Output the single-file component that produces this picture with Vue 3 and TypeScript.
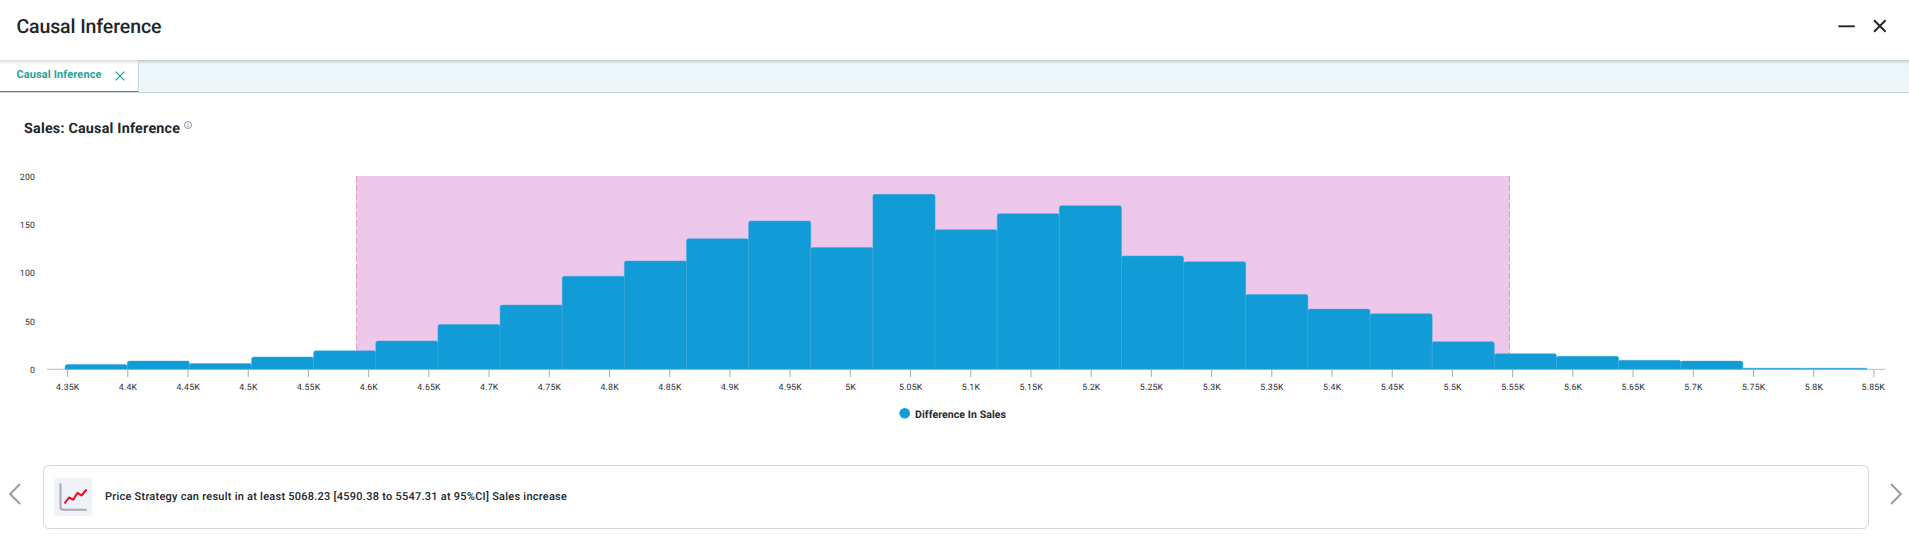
<script setup lang="ts">
interface Bar {
  x: number
  y: number
  path: string
}
interface Tick {
  pos: number
  label: string
}

const BASE = 369.2
const UNIT = 0.966
const TOP = 176
const BAR_START = 65.1
const BAR_WIDTH = 62.14
const OFFSET = 160

const counts: number[] = [
  4.8, 8.4, 5.8, 12.6, 19, 29.2, 46.4, 66.4, 96.2, 112, 135, 153.4, 126, 181, 144.4, 161, 169.2,
  117.2, 111.2, 77.4, 62.2, 57.4, 28.4, 16, 13.4, 9.2, 8.4, 1, 1,
]

const bars: Bar[] = counts.map((n, i) => {
  const x = BAR_START + i * BAR_WIDTH
  const y = BASE - n * UNIT
  const r = Math.min(2, BASE - y)
  const right = x + BAR_WIDTH
  return {
    x,
    y,
    path: `M${x} ${BASE}V${y + r}Q${x} ${y} ${x + r} ${y}H${right - r}Q${right} ${y} ${right} ${y + r}V${BASE}Z`,
  }
})

const xTicks: Tick[] = Array.from({ length: 31 }, (_, i) => ({
  pos: 67.6 + i * 60.21,
  label: `${parseFloat((4.35 + i * 0.05).toFixed(2))}K`,
}))

const yTicks: Tick[] = [0, 50, 100, 150, 200].map((v) => ({
  pos: BASE - v * UNIT,
  label: String(v),
}))

const lowX = 356.6
const highX = 1509.5
</script>

<template>
  <div class="window">
    <header class="titlebar">
      <h1 class="title">Causal Inference</h1>
      <div class="controls">
        <svg width="18" height="18" viewBox="0 0 18 18"><path d="M.4 9.3H16.8" /></svg>
        <svg width="14" height="14" viewBox="0 0 14 14"><path d="M1 1.3L12.6 12.7M12.6 1.3L1 12.7" /></svg>
      </div>
    </header>

    <nav class="tabs">
      <div class="tab">
        <span class="tab-label">Causal Inference</span>
        <svg class="tab-close" width="10" height="10" viewBox="0 0 10 10"><path d="M.6 .6L9.4 9.4M9.4 .6L.6 9.4" /></svg>
      </div>
    </nav>

    <div class="heading">
      <h2 class="subtitle">Sales: Causal Inference</h2>
      <svg class="info" width="8" height="8" viewBox="0 0 8 8">
        <circle cx="4" cy="4" r="3.5" />
        <path d="M4 3.5V6M4 2V2.8" />
      </svg>
    </div>

    <svg class="chart" width="1909" height="270" :viewBox="`0 ${OFFSET} 1909 270`">
      <rect class="band" :x="lowX" :y="TOP" :width="highX - lowX" :height="BASE - TOP" />
      <path class="limit" :d="`M${lowX} ${TOP}V${BASE}`" />
      <path class="limit" :d="`M${highX} ${TOP}V${BASE}`" />
      <path class="axis" d="M47 369.3H1885" />
      <path v-for="t in xTicks" :key="t.label" class="tick" :d="`M${t.pos} 369.5V377`" />
      <path v-for="b in bars" :key="b.x" class="bar" :d="b.path" />
      <path class="axis over" d="M65 369.5H1867" />
      <text v-for="(t, i) in xTicks" :key="t.label" class="label" :x="i === 30 ? t.pos - 0.6 : t.pos + 0.2" y="390" text-anchor="middle">{{ t.label }}</text>
      <text v-for="t in yTicks" :key="t.label" class="label" x="35.1" :y="t.pos + 3.7" text-anchor="end">{{ t.label }}</text>
      <circle class="dot" cx="904.7" cy="413.3" r="5.3" />
      <text class="legend" x="915" y="418">Difference In Sales</text>
    </svg>

    <section class="insight">
      <svg class="arrow" width="12" height="22" viewBox="0 0 12 22"><path d="M11 1L1.2 11L11 21" /></svg>
      <div class="card">
        <div class="thumb">
          <svg width="38" height="38" viewBox="0 0 38 38">
            <path class="frame" d="M6.5 6V29Q6.5 31.8 9.3 31.8H32" />
            <path class="trend" d="M10.5 25.5L15 19.5L19.2 21.7L23.5 14.8L27.5 17.5L32.5 11.5" />
          </svg>
        </div>
        <p class="message">Price Strategy can result in at least 5068.23 [4590.38 to 5547.31 at 95%CI] Sales increase</p>
      </div>
      <svg class="arrow" width="12" height="22" viewBox="0 0 12 22"><path d="M1 1L10.8 11L1 21" /></svg>
    </section>
  </div>
</template>

<style>
body {
  background: #fff;
}
</style>

<style scoped>
.window {
  width: 1909px;
  height: 538px;
  overflow: hidden;
  background: #fff;
  color: #212529;
  font-family: Roboto, sans-serif;
  text-rendering: geometricPrecision;
}
.titlebar {
  height: 60px;
  box-sizing: border-box;
  padding: 0 22px 8px 16.4px;
  display: flex;
  align-items: center;
  justify-content: space-between;
}
.title {
  margin: 1px 0 0;
  font-size: 19.5px;
  font-weight: 500;
  letter-spacing: -0.1px;
  line-height: 24px;
}
.controls {
  display: flex;
  align-items: center;
  gap: 17px;
}
.controls path {
  fill: none;
  stroke: #212529;
  stroke-width: 1.9;
}
.tabs {
  height: 33px;
  box-sizing: border-box;
  display: flex;
  background: #edf6f9;
  border-bottom: 1px solid #c9d6d9;
  box-shadow: inset 0 4px 3px -2px rgba(0, 0, 0, 0.18);
}
.tab {
  width: 139px;
  box-sizing: border-box;
  display: flex;
  align-items: flex-start;
  padding-left: 16.4px;
  background: #fff;
  border-right: 1px solid #c9d3d6;
  border-bottom: 1px solid #1f9f90;
  box-shadow: inset 0 4px 3px -2px rgba(0, 0, 0, 0.15);
}
.tab-label {
  flex: 1;
  margin-top: 7px;
  font-size: 11px;
  line-height: 16px;
  font-weight: 700;
  letter-spacing: 0.12px;
  color: #22a596;
}
.tab-close {
  margin: 11px 13px 0 0;
  fill: none;
  stroke: #22a596;
  stroke-width: 1.3;
}
.heading {
  display: flex;
  align-items: flex-start;
  height: 67px;
  box-sizing: border-box;
  padding: 26px 0 0 24px;
}
.subtitle {
  margin: 1px 0 0;
  font-size: 14.3px;
  line-height: 18px;
  font-weight: 700;
  letter-spacing: 0.22px;
}
.info {
  margin: 2px 0 0 4px;
  fill: none;
  stroke: #6b7480;
  stroke-width: 0.8;
}
.chart {
  display: block;
}
.band {
  fill: #eec8ea;
}
.limit {
  stroke: #e09aae;
  stroke-width: 1;
  stroke-dasharray: 6.5 2.3;
}
.axis {
  stroke: #b5bdc6;
  stroke-width: 1;
}
.over {
  stroke: #7fb9d9;
}
.tick {
  stroke: #a0abb6;
  stroke-width: 1;
}
.bar {
  fill: #119bd7;
  stroke: #3aa9dc;
  stroke-width: 0.5;
}
.label {
  font-size: 8.8px;
  letter-spacing: 0.15px;
  fill: #2d3238;
}
.dot {
  fill: #119bd7;
}
.legend {
  font-size: 10.5px;
  font-weight: 700;
  letter-spacing: 0.1px;
  fill: #25292e;
}
.insight {
  display: flex;
  align-items: center;
  height: 64px;
  margin-top: 35px;
  padding: 0 7px 0 9px;
}
.arrow {
  flex: none;
  margin-top: -6px;
  fill: none;
  stroke: #9c9c9c;
  stroke-width: 1.9;
}
.card {
  flex: 1;
  height: 64px;
  box-sizing: border-box;
  margin: 0 21px 0 22px;
  padding-left: 10px;
  display: flex;
  align-items: center;
  border: 1px solid #d5d5d5;
  border-radius: 6px;
}
.thumb {
  width: 38px;
  height: 38px;
  border-radius: 3px;
  background: #eff2f8;
}
.thumb svg {
  display: block;
  fill: none;
}
.frame {
  stroke: #aaa;
  stroke-width: 2;
  stroke-linecap: round;
}
.trend {
  stroke: #f5061f;
  stroke-width: 2;
  stroke-linejoin: round;
}
.message {
  margin: 0 0 1px 13px;
  font-size: 11px;
  font-weight: 500;
  letter-spacing: 0.25px;
}
</style>
